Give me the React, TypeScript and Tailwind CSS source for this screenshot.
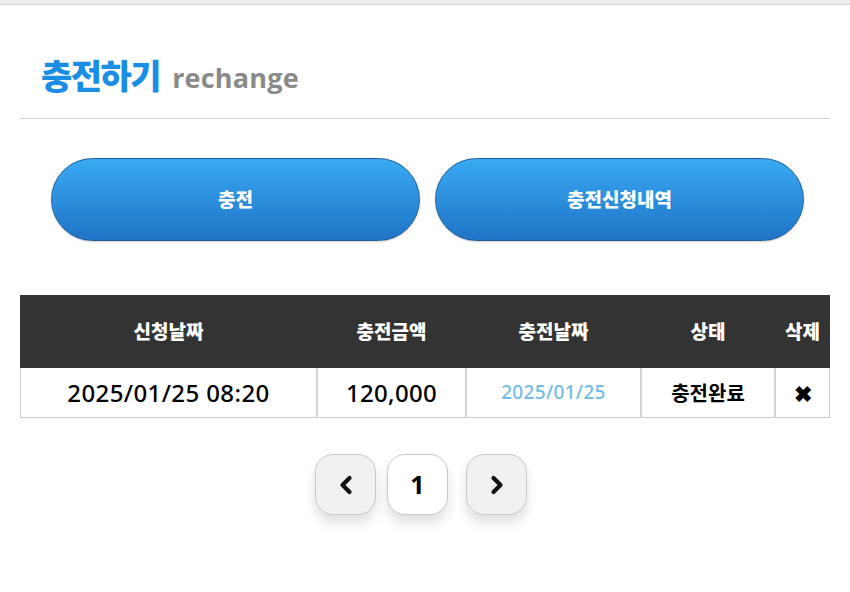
import React from "react";

const kr = { fontFamily: '"Noto Sans CJK KR", "Noto Sans", sans-serif' };

function Chevron({ dir }: { dir: "left" | "right" }) {
  return (
    <svg width="18" height="22" viewBox="0 0 18 22">
      <path
        d={dir === "left" ? "M12.5 4 L5.5 11 L12.5 18" : "M5.5 4 L12.5 11 L5.5 18"}
        fill="none"
        stroke="#111"
        strokeWidth="4.2"
        strokeLinecap="round"
        strokeLinejoin="round"
      />
    </svg>
  );
}

export default function App() {
  const cols = ["w-[297px]", "w-[149px]", "w-[175px]", "w-[134px]", "w-[55px]"];
  const num = { fontFamily: '"Noto Sans", "Open Sans", sans-serif' };
  return (
    <div className="w-[850px] h-[592px] bg-white overflow-hidden" style={kr}>
      <div className="h-[5px] bg-[#eeeeee] border-b border-[#cfcfcf]" />
      <div className="px-[20px]">
        <div className="flex items-end h-[113px] pl-[21px] pb-[26px]">
          <span className="text-[34px] leading-none font-black text-[#1a8de4] tracking-[-1.5px]">충전하기</span>
          <span
            className="ml-[12px] mb-[1px] text-[27px] leading-none font-bold text-[#8a8a8a] tracking-[0.2px]"
            style={{ fontFamily: '"Open Sans", "Noto Sans", sans-serif' }}
          >
            rechange
          </span>
        </div>
        <div className="h-[1px] bg-[#d0d0d0]" />
        <div className="flex gap-[15px] pl-[31px] mt-[39px]">
          {["충전", "충전신청내역"].map((t) => (
            <button
              key={t}
              className="shrink-0 w-[369px] h-[83px] rounded-full border border-[#1e5f9c] bg-gradient-to-b from-[#3aa9f3] to-[#1f74c6] text-white text-[19px] font-black shadow-[0_1px_2px_rgba(0,0,0,0.2)]"
              style={kr}
            >
              {t}
            </button>
          ))}
        </div>
        <div className="mt-[54px] w-[810px]">
          <div className="flex h-[73px] bg-[#333333] text-white text-[19px] font-black">
            {["신청날짜", "충전금액", "충전날짜", "상태", "삭제"].map((h, i) => (
              <div key={h} className={`${cols[i]} flex items-center justify-center`}>
                {h}
              </div>
            ))}
          </div>
          <div className="flex h-[50px] border border-t-0 border-[#cccccc] text-black">
            <div className={`${cols[0]} flex items-center justify-center border-r-2 border-[#d4d4d4] text-[24px] font-medium tracking-[0.4px]`} style={num}>
              2025/01/25 08:20
            </div>
            <div className={`${cols[1]} flex items-center justify-center border-r-2 border-[#d4d4d4] text-[24px] font-medium tracking-[0.3px]`} style={num}>
              120,000
            </div>
            <div className={`${cols[2]} flex items-center justify-center border-r-2 border-[#d4d4d4] text-[19px] font-medium text-[#72bde6] tracking-[0.3px]`} style={num}>
              2025/01/25
            </div>
            <div className={`${cols[3]} flex items-center justify-center border-r-2 border-[#d4d4d4] text-[20px] font-bold`}>
              충전완료
            </div>
            <div className="flex-1 flex items-center justify-center text-[22px] font-black">✖</div>
          </div>
        </div>
        <div className="flex mt-[36px] pl-[295px]">
          <button className="w-[61px] h-[61px] rounded-[18px] border border-[#c8c8c8] bg-[#f1f1f1] flex items-center justify-center shadow-[0_8px_12px_rgba(0,0,0,0.12)]">
            <Chevron dir="left" />
          </button>
          <button className="ml-[11px] w-[61px] h-[61px] rounded-[18px] border border-[#c8c8c8] bg-white flex items-center justify-center text-[25px] font-bold shadow-[0_8px_12px_rgba(0,0,0,0.12)]" style={num}>
            1
          </button>
          <button className="ml-[18px] w-[61px] h-[61px] rounded-[18px] border border-[#c8c8c8] bg-[#f1f1f1] flex items-center justify-center shadow-[0_8px_12px_rgba(0,0,0,0.12)]">
            <Chevron dir="right" />
          </button>
        </div>
      </div>
    </div>
  );
}
